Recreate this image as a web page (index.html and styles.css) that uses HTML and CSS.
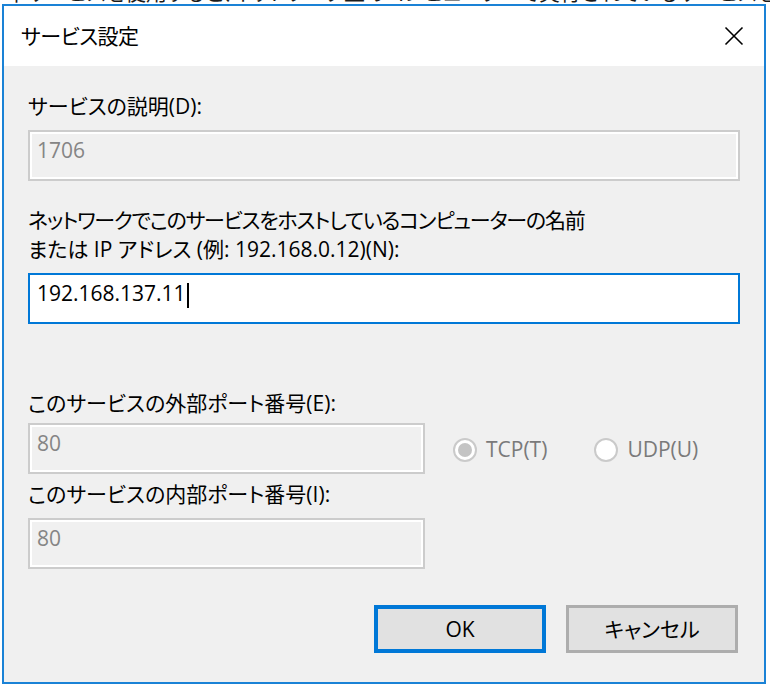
FILE: index.html
```html
<!DOCTYPE html>
<html lang="ja">
<head>
<meta charset="utf-8">
<title>サービス設定</title>
<link rel="stylesheet" href="styles.css">
</head>
<body>
<div class="backdrop"><div class="backdrop-text">本サービスを使用すると、ネットワーク上のコンピューターで実行されているサービスを使用できます。</div></div>
<div class="window">
  <div class="titlebar">
    <span class="title">サービス設定</span>
    <svg class="close" width="20" height="20" viewBox="0 0 20 20" aria-label="閉じる">
      <path d="M1.5 1.5 L18.5 18.5 M18.5 1.5 L1.5 18.5" stroke="#000" stroke-width="1.6" fill="none"/>
    </svg>
  </div>
  <div class="content">
    <div class="label label-first">サービスの説明(D):</div>
    <div class="field field-disabled field-gap">1706</div>

    <div class="label label-host"><span class="tight">ネットワークでこのサービスをホストしているコンピューターの名前</span><br>または IP アドレス (例: 192.168.0.12)(N):</div>
    <div class="field field-focused field-gap"><span class="field-value">192.168.137.11</span><span class="caret"></span></div>

    <div class="label label-ext">このサービスの外部ポート番号(E):</div>
    <div class="port-row">
      <div class="field field-disabled field-short">80</div>
      <div class="radios">
        <span class="radio radio-checked"><span class="radio-circle"><span class="radio-dot"></span></span><span class="radio-text">TCP(T)</span></span>
        <span class="radio"><span class="radio-circle"></span><span class="radio-text">UDP(U)</span></span>
      </div>
    </div>

    <div class="label label-int">このサービスの内部ポート番号(I):</div>
    <div class="field field-disabled field-short field-gap">80</div>

    <div class="buttons">
      <div class="btn btn-default">OK</div>
      <div class="btn">キャンセル</div>
    </div>
  </div>
</div>
</body>
</html>
```

FILE: styles.css
```css
html, body {
  margin: 0;
  padding: 0;
  background: #ffffff;
}

body {
  width: 770px;
  height: 684px;
  overflow: hidden;
  font-family: "Open Sans", "Noto Sans CJK JP", sans-serif;
  font-size: 21px;
  font-feature-settings: "palt";
  color: #000;
}

.backdrop {
  height: 4px;
  overflow: hidden;
  background: #fff;
}

.backdrop-text {
  margin-top: -21px;
  padding-left: 6px;
  line-height: 26px;
  white-space: nowrap;
  color: #1a1a1a;
}

.window {
  box-sizing: border-box;
  width: 764px;
  height: 680px;
  margin-left: 2px;
  border: 2px solid #1a82d6;
  display: flex;
  flex-direction: column;
}

.titlebar {
  height: 60px;
  flex: none;
  background: #fff;
  display: flex;
  align-items: center;
  justify-content: space-between;
  padding: 0 20px 0 17px;
}

.title {
  line-height: 29px;
  letter-spacing: -0.5px;
}

.close {
  display: block;
}

.content {
  flex: 1;
  background: #f0f0f0;
  padding: 26px 24px 0 24px;
}

.label {
  line-height: 29px;
  white-space: nowrap;
}

.tight {
  letter-spacing: -1.25px;
}

.label-host { margin-top: 25px; }
.label-ext { margin-top: 65px; }
.label-int { margin-top: 6px; }

.field {
  box-sizing: border-box;
  height: 51px;
  padding: 4px 0 0 7px;
  line-height: 29px;
  display: flex;
  align-items: flex-start;
}

.field-gap { margin-top: 9px; }

.field-disabled {
  border: 2px solid #cccccc;
  box-shadow: inset 0 0 0 2px #ffffff;
  background: #f0f0f0;
  color: #858585;
}

.field-focused {
  border: 2px solid #0078d7;
  background: #ffffff;
  color: #000;
}

.caret {
  width: 2px;
  height: 25px;
  margin-top: 4px;
  margin-left: 1px;
  background: #000;
}

.field-short {
  width: 397px;
}

.port-row {
  margin-top: 5px;
  display: flex;
  align-items: center;
}

.radios {
  display: flex;
  align-items: center;
  margin-left: 28px;
  padding-top: 2px;
  color: #7a7a7a;
}

.radio {
  display: flex;
  align-items: center;
}

.radio-checked {
  margin-right: 47px;
}

.radio-circle {
  box-sizing: border-box;
  width: 24px;
  height: 24px;
  border: 2px solid #cacaca;
  border-radius: 50%;
  background: #ffffff;
  display: flex;
  align-items: center;
  justify-content: center;
}

.radio-dot {
  width: 14px;
  height: 14px;
  border-radius: 50%;
  background: #c4c4c4;
}

.radio-text {
  margin-left: 9px;
  line-height: 29px;
}

.buttons {
  margin-top: 36px;
  margin-right: 2px;
  display: flex;
  justify-content: flex-end;
  gap: 20px;
}

.btn {
  box-sizing: border-box;
  width: 172px;
  height: 48px;
  background: #e1e1e1;
  border: 3px solid #adadad;
  display: flex;
  align-items: center;
  justify-content: center;
  line-height: 29px;
}

.btn-default {
  border: 4px solid #0078d7;
}
```
